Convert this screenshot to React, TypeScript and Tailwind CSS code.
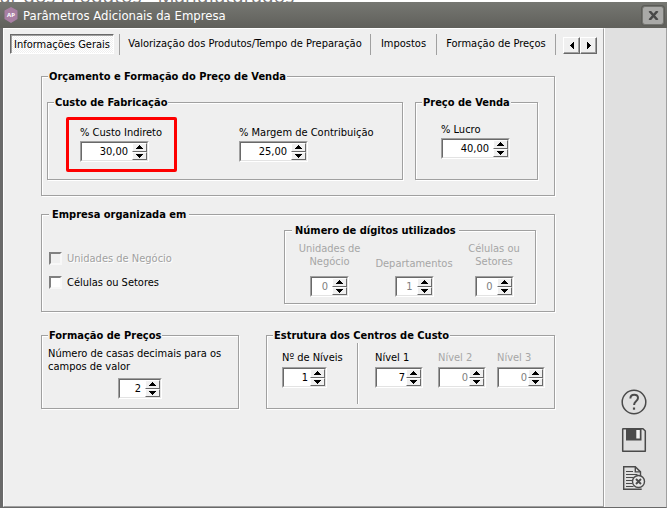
import { useState } from 'react'
import type { ReactNode } from 'react'

type GroupProps = {
  title: string
  className?: string
  legendClassName?: string
  children: ReactNode
}

function Group({ title, className = '', legendClassName = 'ml-1.5 px-px', children }: GroupProps) {
  return (
    <fieldset
      className={`min-w-0 border border-[#a0a0a0] shadow-[1px_1px_0_#fff,inset_1px_1px_0_#fff] ${className}`}
    >
      <legend className={`bg-[#efefef] pt-0.5 font-bold leading-[14px] whitespace-nowrap ${legendClassName}`}>{title}</legend>
      {children}
    </fieldset>
  )
}

function Arrow({ up = false }: { up?: boolean }) {
  return (
    <svg width="7" height="4" viewBox="0 0 7 4" shapeRendering="crispEdges">
      <path d={up ? 'M3 0h1v1h1v1h1v1h1v1H0V3h1V2h1V1h1z' : 'M0 0h7v1H6v1H5v1H4v1H3V3H2V2H1V1H0z'} />
    </svg>
  )
}

type SpinProps = {
  id: string
  label: string
  initial: number
  decimals?: number
  disabled?: boolean
  className?: string
  labelClassName?: string
  boxClassName?: string
  inputClassName?: string
}

function SpinField({
  id,
  label,
  initial,
  decimals = 0,
  disabled = false,
  className = '',
  labelClassName = '',
  boxClassName = 'w-[69px]',
  inputClassName = 'pr-1',
}: SpinProps) {
  const [value, setValue] = useState(initial)
  const text = value.toFixed(decimals).replace('.', ',')
  const button =
    'flex w-full flex-1 items-center justify-center border border-t-white border-l-white border-r-[#696969] border-b-[#696969] bg-[#f0f0f0]'

  return (
    <div className={`flex flex-col ${className}`}>
      <label htmlFor={id} className={`${disabled ? 'text-[#a6a6a6]' : ''} ${labelClassName}`}>
        {label}
      </label>
      <div
        className={`flex h-[21px] border border-t-[#a0a0a0] border-l-[#a0a0a0] border-r-white border-b-white bg-white ${boxClassName}`}
      >
        <div className="flex min-w-0 flex-1 border border-t-[#696969] border-l-[#696969] border-r-[#e3e3e3] border-b-[#e3e3e3]">
          <input
            id={id}
            value={text}
            disabled={disabled}
            onChange={(e) => setValue(Number(e.target.value.replace(',', '.')) || 0)}
            className={`w-0 min-w-0 flex-1 bg-white text-right text-[11px] outline-none disabled:text-[#808080] ${inputClassName}`}
          />
          <div className="flex w-[15px] shrink-0 flex-col">
            <button type="button" aria-label={`Aumentar ${label}`} disabled={disabled} onClick={() => setValue(value + 1)} className={button}>
              <Arrow up />
            </button>
            <button type="button" aria-label={`Diminuir ${label}`} disabled={disabled} onClick={() => setValue(Math.max(0, value - 1))} className={button}>
              <Arrow />
            </button>
          </div>
        </div>
      </div>
    </div>
  )
}

function CheckField({ id, label, disabled = false }: { id: string; label: string; disabled?: boolean }) {
  return (
    <div className="flex h-6 items-center gap-[5px]">
      <input
        id={id}
        type="checkbox"
        disabled={disabled}
        className="size-[13px] appearance-none border-2 border-t-[#808080] border-l-[#808080] border-r-[#f8f8f8] border-b-[#f8f8f8] bg-white checked:bg-black disabled:bg-[#efefef]"
      />
      <label htmlFor={id} className={disabled ? 'text-[#a0a0a0] [text-shadow:1px_1px_0_#fff]' : ''}>
        {label}
      </label>
    </div>
  )
}

const tabs = [
  { title: 'Informações Gerais', width: 'w-[110px]' },
  { title: 'Valorização dos Produtos/Tempo de Preparação', width: 'w-[251px]' },
  { title: 'Impostos', width: 'w-[66px]' },
  { title: 'Formação de Preços', width: 'w-[119px]' },
]

function TabBar() {
  const [active, setActive] = useState(0)
  const scroll =
    'flex h-[17px] w-[17px] items-center justify-center border border-t-white border-l-white border-r-[#696969] border-b-[#696969] bg-[#f0f0f0] shadow-[inset_-1px_-1px_0_#a0a0a0]'

  return (
    <div className="flex items-start pt-[5px] pl-1.5">
      {tabs.map((tab, i) => (
        <div key={tab.title} className={`flex h-[21px] shrink-0 items-start border-r border-[#a0a0a0] ${tab.width}`}>
          <button
            type="button"
            onClick={() => setActive(i)}
            className={
              i === active
                ? 'mr-[5px] h-5 flex-1 border border-t-[#696969] border-l-[#696969] border-r-white border-b-white bg-[conic-gradient(#fff_25%,#efefef_0_50%,#fff_0_75%,#efefef_0)] bg-[length:2px_2px] whitespace-nowrap shadow-[inset_1px_1px_0_#a0a0a0]'
                : 'h-[18px] flex-1 whitespace-nowrap'
            }
          >
            {tab.title}
          </button>
        </div>
      ))}
      <div className="mt-[3px] ml-[7px] flex">
        <button type="button" aria-label="Abas anteriores" className={scroll}>
          <svg width="4" height="7" viewBox="0 0 4 7" shapeRendering="crispEdges">
            <path d="M4 0v7H3V6H2V5H1V4H0V3h1V2h1V1h1V0z" />
          </svg>
        </button>
        <button type="button" aria-label="Próximas abas" className={scroll}>
          <svg width="4" height="7" viewBox="0 0 4 7" shapeRendering="crispEdges">
            <path d="M0 0v7h1V6h1V5h1V4h1V3H3V2H2V1H1V0z" />
          </svg>
        </button>
      </div>
    </div>
  )
}

function SideActions() {
  return (
    <aside className="flex w-[62px] shrink-0 flex-col items-center justify-end gap-3 border-l border-white bg-[#e0e0e0] pr-[3px] pb-4">
      <button type="button" aria-label="Ajuda">
        <svg width="26" height="26" viewBox="0 0 26 26" fill="none" stroke="#4a4a4a">
          <circle cx="13" cy="13" r="11.8" strokeWidth="1.5" />
          <path d="M9.4 9.5C9.4 7 11 5.7 13.2 5.7c2.2 0 3.8 1.3 3.8 3.4 0 1.7-1 2.5-2.2 3.5-1.2 1-1.7 1.7-1.7 3.5" strokeWidth="2" />
          <path d="M13 18.5v2.2" strokeWidth="2.2" />
        </svg>
      </button>
      <button type="button" aria-label="Salvar">
        <svg width="26" height="26" viewBox="0 0 26 26" fill="none" stroke="#4a4a4a" strokeWidth="1.5">
          <path d="M2 1.7h20l2.3 2.3v20.3H1.7V2z" strokeLinejoin="round" />
          <path d="M5 1.5h15.5v12H5z" fill="#4a4a4a" stroke="none" />
          <path d="M15.3 3h3.5v8.5h-3.5z" fill="#f2f2f2" stroke="none" />
        </svg>
      </button>
      <button type="button" aria-label="Cancelar">
        <svg width="24" height="26" viewBox="0 0 24 26" fill="none" stroke="#4a4a4a" strokeWidth="1.4">
          <path d="M19 23.5v.8H1.7V1.7h11.6l5.2 5.2v4" />
          <path d="M13.3 1.7v5.2h5.2" />
          <path d="M4 6.5h7M4 9.5h11.5M4 12.5h8.5M4 15.5h6.500M4 18.500h6.500M4 21.500h7.500" strokeWidth="1.2" />
          <circle cx="16.5" cy="16.5" r="6" fill="#e8e8e8" />
          <path d="M14 14l5 5M19 14l-5 5" strokeWidth="1.9" />
        </svg>
      </button>
    </aside>
  )
}

export default function App() {
  return (
    <div className="flex min-h-screen flex-col bg-white font-['DejaVu_Sans_Condensed','DejaVu_Sans',sans-serif] text-[11px] leading-[13px] text-black">
      <div className="flex h-0.5 items-end overflow-hidden font-['Open_Sans',sans-serif] text-[19px] leading-5 whitespace-nowrap text-[#777]">
        <span className="-mb-1">ar dos Produtos - Manufaturados</span>
      </div>
      <header className="flex h-[26px] shrink-0 items-center bg-linear-to-b from-[#767772] to-[#60605b] pr-[3px] pl-1">
        <svg width="14" height="16" viewBox="0 0 14 16">
          <path d="M7 0l6.5 3.5v8.5L7 16 .5 12V3.5z" fill="#a87fa3" />
          <text x="7" y="10" textAnchor="middle" fontSize="6" fontWeight="bold" fill="#fff" fontFamily="Open Sans">
            AP
          </text>
        </svg>
        <h1 className="ml-[5px] flex-1 text-[13px] text-white">Parâmetros Adicionais da Empresa</h1>
        <button
          type="button"
          aria-label="Fechar"
          className="flex h-[19px] w-[22px] items-center justify-center rounded-[3px] border border-[#73746f] bg-[#a9a9a7] shadow-[0_0_0_1px_#5c5c58]"
        >
          <svg width="11" height="9" viewBox="0 0 11 9" fill="none" stroke="#484848" strokeWidth="2.5">
            <path d="M1.5 0l8 9M9.5 0l-8 9" />
          </svg>
        </button>
      </header>

      <div className="flex flex-1 border-r border-b border-l-3 border-r-[#a0a0a0] border-b-[#696969] border-l-[#6a6a6a]">
        <main className="min-w-0 flex-1 border border-t-white border-r-[#a0a0a0] border-b-[#a0a0a0] border-l-white bg-[#efefef]">
          <TabBar />

          <form className="pt-[13px] pr-12 pl-[37px]">
            <Group title="Orçamento e Formação do Preço de Venda" className="pr-4 pb-[15px] pl-[5px]" legendClassName="ml-px px-px">
              <div className="mt-2.5 flex gap-3">
                <Group title="Custo de Fabricação" className="h-[86px] flex-1">
                  <div className="flex pt-[7px] pl-[18px]">
                    <div className="h-[55px] w-[111px] rounded-[2px] border-3 border-[#fe0000] pt-1.5 pl-[11px]">
                      <SpinField id="custo" label="% Custo Indireto" initial={30} decimals={2} labelClassName="mb-0.5" />
                    </div>
                    <SpinField
                      id="margem"
                      label="% Margem de Contribuição"
                      initial={25}
                      decimals={2}
                      className="ml-[62px] pt-[9px]"
                      labelClassName="mb-0.5 whitespace-nowrap"
                    />
                  </div>
                </Group>
                <Group title="Preço de Venda" className="h-[86px] w-[123px]">
                  <SpinField id="lucro" label="% Lucro" initial={40} decimals={2} className="pt-[13px] pl-[25px]" labelClassName="mb-0.5" />
                </Group>
              </div>
            </Group>

            <Group title="Empresa organizada em" className="mt-2.5 pr-[18px] pb-[7px] pl-[7px]" legendClassName="px-[3px]">
              <div className="flex items-start justify-between">
                <div className="pt-6">
                  <CheckField id="unidades" label="Unidades de Negócio" disabled />
                  <CheckField id="celulas" label="Células ou Setores" />
                </div>
                <Group title="Número de dígitos utilizados" className="h-[82px] w-[252px]" legendClassName="ml-[7px] px-[3px]">
                  <div className="flex items-end pt-1 text-center">
                    <SpinField
                      id="dig-unidades"
                      label="Unidades de Negócio"
                      initial={0}
                      disabled
                      className="ml-2 w-[73px] items-center"
                      labelClassName="mb-2 w-16"
                      boxClassName="w-[39px]"
                    />
                    <SpinField
                      id="dig-deptos"
                      label="Departamentos"
                      initial={1}
                      disabled
                      className="w-24 items-center"
                      labelClassName="mb-1.5"
                      boxClassName="w-[39px]"
                    />
                    <SpinField
                      id="dig-celulas"
                      label="Células ou Setores"
                      initial={0}
                      disabled
                      className="w-16 items-center"
                      labelClassName="mb-2 w-14"
                      boxClassName="w-[39px]"
                    />
                  </div>
                </Group>
              </div>
            </Group>

            <div className="mt-[15px] flex gap-[27px]">
              <Group title="Formação de Preços" className="h-[82px] w-[198px]">
                <SpinField
                  id="casas"
                  label="Número de casas decimais para os campos de valor"
                  initial={2}
                  className="pt-1 pl-1.5"
                  labelClassName="mb-[5px]"
                  boxClassName="ml-[70px] w-[44px]"
                />
              </Group>
              <Group title="Estrutura dos Centros de Custo" className="h-[82px] flex-1">
                <div className="flex">
                  <SpinField
                    id="niveis"
                    label="Nº de Níveis"
                    initial={1}
                    className="w-[90px] pt-2 pl-[15px]"
                    labelClassName="mb-[3px]"
                    boxClassName="w-[45px]"
                    inputClassName="pr-0.5"
                  />
                  <div className="flex h-[61px] border-l border-[#a0a0a0] pt-2 pl-[17px] shadow-[inset_1px_0_0_#fff]">
                    <SpinField id="nivel1" label="Nível 1" initial={7} className="w-[63px]" labelClassName="mb-[3px]" boxClassName="w-12" inputClassName="pr-px" />
                    <SpinField id="nivel2" label="Nível 2" initial={0} disabled className="w-[59px]" labelClassName="mb-[3px]" boxClassName="w-12" inputClassName="pr-px" />
                    <SpinField id="nivel3" label="Nível 3" initial={0} disabled labelClassName="mb-[3px]" boxClassName="w-12" inputClassName="pr-px" />
                  </div>
                </div>
              </Group>
            </div>
          </form>
        </main>
        <SideActions />
      </div>
    </div>
  )
}
